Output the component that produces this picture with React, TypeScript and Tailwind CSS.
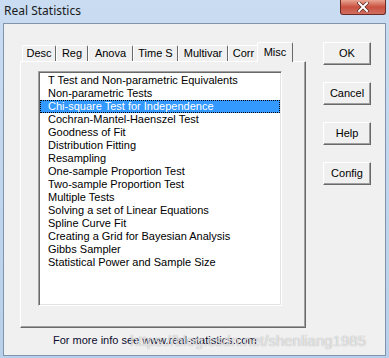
const tabs = [
  { label: "Desc", w: "w-[34px]" },
  { label: "Reg", w: "w-[32px]" },
  { label: "Anova", w: "w-[45px]" },
  { label: "Time S", w: "w-[45px]" },
  { label: "Multivar", w: "w-[50px]" },
  { label: "Corr", w: "w-[31px]" },
];

const items = [
  "T Test and Non-parametric Equivalents",
  "Non-parametric Tests",
  "Chi-square Test for Independence",
  "Cochran-Mantel-Haenszel Test",
  "Goodness of Fit",
  "Distribution Fitting",
  "Resampling",
  "One-sample Proportion Test",
  "Two-sample Proportion Test",
  "Multiple Tests",
  "Solving a set of Linear Equations",
  "Spline Curve Fit",
  "Creating a Grid for Bayesian Analysis",
  "Gibbs Sampler",
  "Statistical Power and Sample Size",
];

function Button({ label }: { label: string }) {
  return (
    <div className="w-[48px] h-[23px] flex items-center justify-center bg-[#f0f0f0] border border-t-white border-l-white border-b-[#696969] border-r-[#696969] shadow-[inset_-1px_-1px_0_#a0a0a0] text-[11px] text-black">
      {label}
    </div>
  );
}

export default function App() {
  return (
    <div className="relative w-[389px] h-[358px] bg-gradient-to-b from-[#c9dcf1] to-[#b8d0ea] font-['Liberation_Sans',Arial,sans-serif] overflow-hidden">
      {/* title bar */}
      <div className="h-[23px] flex items-start justify-between">
        <div className="pl-[4px] pt-[3px] text-[12px] text-[#1a1a1a] font-['Noto_Sans',sans-serif] leading-[16px]">
          Real Statistics
        </div>
        <div className="mr-[3px] w-[46px] h-[15px] rounded-b-[3px] border border-t-0 border-[#6d2a24] bg-gradient-to-b from-[#e8a493] via-[#c9503f] to-[#cf6e5f] flex items-center justify-center">
          <svg width="12" height="10" viewBox="0 0 12 10">
            <path d="M2 1 L10 9 M10 1 L2 9" stroke="#5a2a24" strokeWidth="3.4" strokeLinecap="square" />
            <path d="M2 1 L10 9 M10 1 L2 9" stroke="#ffffff" strokeWidth="2" strokeLinecap="square" />
          </svg>
        </div>
      </div>

      {/* client area */}
      <div className="ml-[3px] w-[383px] h-[333px] border border-[#8194ad] bg-[#f0f0f0] flex flex-col">
        <div className="flex pt-[18px] pl-[16px]">
          {/* tab control */}
          <div className="w-[286px] flex flex-col">
            <div className="flex h-[19px] pl-[2px] items-end relative z-10">
              {tabs.map((t) => (
                <div
                  key={t.label}
                  className={`${t.w} h-[16px] flex items-center justify-center border-l border-t border-r border-l-white border-t-white border-r-[#696969] rounded-t-[2px] text-[11px] text-black`}
                >
                  {t.label}
                </div>
              ))}
              <div className="w-[36px] h-[20px] -mb-[1px] -ml-[2px] bg-[#f0f0f0] flex items-start justify-center pt-[1px] border-l border-t border-r border-l-white border-t-white border-r-[#696969] rounded-t-[2px] text-[11px] text-black">
                Misc
              </div>
            </div>
            <div className="h-[267px] border border-t-white border-l-white border-r-[#696969] border-b-[#696969] shadow-[inset_-1px_-1px_0_#a0a0a0] pl-[17px] pt-[9px]">
              <div className="w-[244px] h-[235px] bg-white border border-t-[#a0a0a0] border-l-[#a0a0a0] border-r-white border-b-white shadow-[inset_1px_1px_0_#696969,inset_-1px_-1px_0_#e3e3e3] pt-[2px] px-[1px]">
                {items.map((it, i) => (
                  <div
                    key={it}
                    className={`h-[13px] leading-[13px] pl-[8px] text-[11px] whitespace-nowrap ${
                      i === 2
                        ? "bg-[#3399ff] text-white outline-1 outline-dotted outline-offset-[-1px] outline-[#000000]"
                        : "text-black"
                    }`}
                  >
                    {it}
                  </div>
                ))}
              </div>
            </div>
          </div>

          {/* buttons */}
          <div className="ml-[17px] flex flex-col gap-[17px]">
            <Button label="OK" />
            <Button label="Cancel" />
            <Button label="Help" />
            <Button label="Config" />
          </div>
        </div>

        <div className="pl-[49px] pt-[6px] text-[11px] leading-[13px] text-[#0b0b2e]">
          For more info see www.real-statistics.com
        </div>
      </div>

      {/* watermark overlay */}
      <div className="absolute left-[130px] top-[332px] text-[15px] leading-[18px] text-white/70 [text-shadow:0_0_1px_rgba(90,90,90,0.6)] whitespace-nowrap font-['Liberation_Sans',sans-serif]">
        https://blog.csdn.net/shenliang1985
      </div>
    </div>
  );
}
